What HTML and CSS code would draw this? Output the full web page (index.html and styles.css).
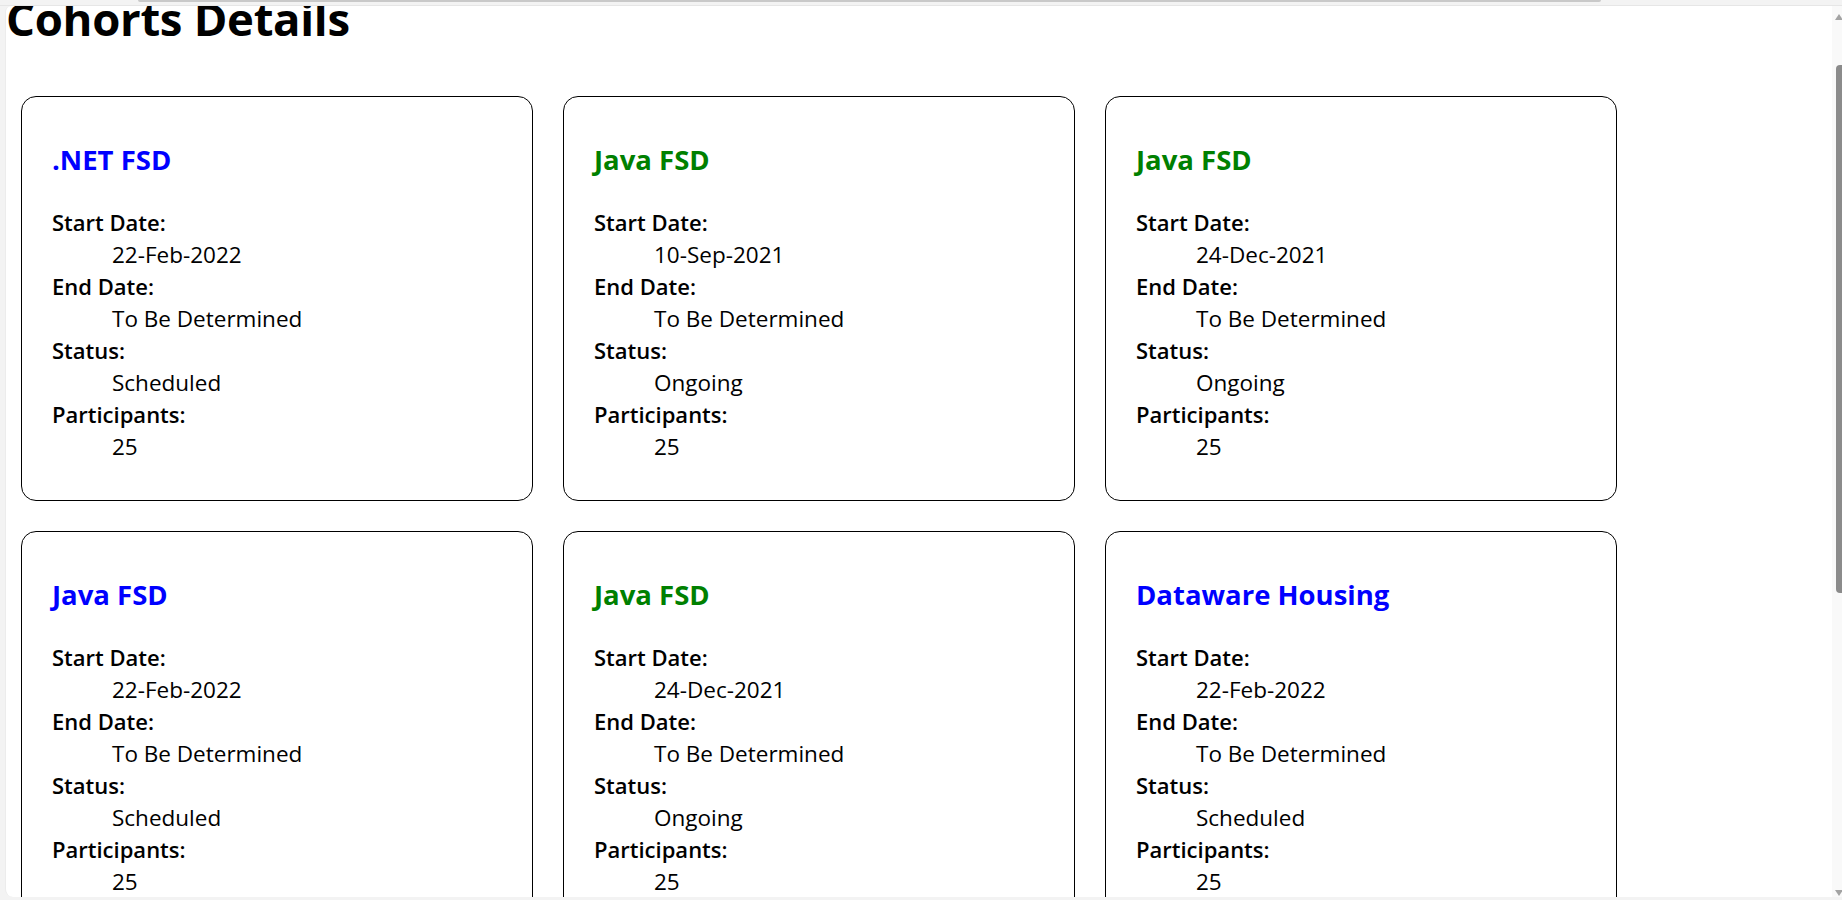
FILE: index.html
```html
<!DOCTYPE html>
<html lang="en">
<head>
<meta charset="utf-8">
<title>Cohorts Details</title>
<link rel="stylesheet" href="styles.css">
</head>
<body>
<div class="frame">
  <div class="topbar"><div class="topbar-line"></div></div>
  <div class="window">
    <div class="viewport">
      <div class="page">
        <h1 class="heading">Cohorts Details</h1>
        <div class="cohorts">
          <div class="card">
            <h3 class="title scheduled">.NET FSD</h3>
            <dl class="info">
              <dt>Start Date:</dt><dd>22-Feb-2022</dd>
              <dt>End Date:</dt><dd>To Be Determined</dd>
              <dt>Status:</dt><dd>Scheduled</dd>
              <dt>Participants:</dt><dd>25</dd>
            </dl>
          </div>
          <div class="card">
            <h3 class="title ongoing">Java FSD</h3>
            <dl class="info">
              <dt>Start Date:</dt><dd>10-Sep-2021</dd>
              <dt>End Date:</dt><dd>To Be Determined</dd>
              <dt>Status:</dt><dd>Ongoing</dd>
              <dt>Participants:</dt><dd>25</dd>
            </dl>
          </div>
          <div class="card">
            <h3 class="title ongoing">Java FSD</h3>
            <dl class="info">
              <dt>Start Date:</dt><dd>24-Dec-2021</dd>
              <dt>End Date:</dt><dd>To Be Determined</dd>
              <dt>Status:</dt><dd>Ongoing</dd>
              <dt>Participants:</dt><dd>25</dd>
            </dl>
          </div>
          <div class="card">
            <h3 class="title scheduled">Java FSD</h3>
            <dl class="info">
              <dt>Start Date:</dt><dd>22-Feb-2022</dd>
              <dt>End Date:</dt><dd>To Be Determined</dd>
              <dt>Status:</dt><dd>Scheduled</dd>
              <dt>Participants:</dt><dd>25</dd>
            </dl>
          </div>
          <div class="card">
            <h3 class="title ongoing">Java FSD</h3>
            <dl class="info">
              <dt>Start Date:</dt><dd>24-Dec-2021</dd>
              <dt>End Date:</dt><dd>To Be Determined</dd>
              <dt>Status:</dt><dd>Ongoing</dd>
              <dt>Participants:</dt><dd>25</dd>
            </dl>
          </div>
          <div class="card">
            <h3 class="title scheduled">Dataware Housing</h3>
            <dl class="info">
              <dt>Start Date:</dt><dd>22-Feb-2022</dd>
              <dt>End Date:</dt><dd>To Be Determined</dd>
              <dt>Status:</dt><dd>Scheduled</dd>
              <dt>Participants:</dt><dd>25</dd>
            </dl>
          </div>
        </div>
      </div>
    </div>
    <div class="scrollbar">
      <svg class="arrow" width="10" height="8" viewBox="0 0 10 8"><polygon points="1,7 5,1 9,7" fill="#a3a3a3"/></svg>
      <div class="thumb"></div>
      <div class="track-rest"></div>
      <svg class="arrow" width="10" height="8" viewBox="0 0 10 8"><polygon points="1,1 5,7 9,1" fill="#a3a3a3"/></svg>
    </div>
  </div>
</div>
</body>
</html>
```

FILE: styles.css
```css
html, body {
  margin: 0;
  padding: 0;
  background: #f3f3f3;
}

.frame {
  width: 1842px;
  height: 900px;
  display: flex;
  flex-direction: column;
  background: #f3f3f3;
  overflow: hidden;
}

.topbar {
  height: 6px;
  flex: none;
  border-bottom: 1px solid #e6e6e6;
  box-sizing: border-box;
  padding-left: 138px;
  padding-right: 241px;
}

.topbar-line {
  height: 2px;
  background: #c9c9c9;
  border-radius: 0 0 2px 2px;
}

.window {
  flex: 1;
  display: flex;
  margin-left: 5px;
  margin-bottom: 3px;
  min-height: 0;
}

.viewport {
  flex: 1;
  background: #ffffff;
  border-left: 1px solid #ececec;
  border-radius: 6px 0 0 8px;
  overflow: hidden;
  font-family: "Open Sans", "Noto Sans", sans-serif;
  color: #000;
}

/* page is scrolled down slightly */
.page {
  margin-top: -20px;
}

.heading {
  margin: 0 0 31px;
  font-size: 45.5px;
  line-height: 64px;
  font-weight: 700;
  letter-spacing: -0.3px;
}

.cohorts {
  display: flex;
  flex-wrap: wrap;
}

.card {
  box-sizing: border-box;
  width: 512px;
  margin: 15px;
  padding: 16px 30px 14px;
  border: 1px solid #000;
  border-radius: 15px;
}

.title {
  margin: 28px 0;
  font-size: 27.5px;
  line-height: 37px;
  font-weight: 700;
}

.title.scheduled { color: #0000ff; }
.title.ongoing { color: #008000; }

.info {
  margin: 24px 0;
  font-size: 22px;
  line-height: 32px;
}

.info dt {
  font-weight: 600;
}

.info dd {
  margin-left: 60px;
  font-size: 22.5px;
  line-height: 32px;
  padding-top: 1px;
  margin-bottom: -1px;
}

.scrollbar {
  width: 10px;
  flex: none;
  background: #f9f9f9;
  display: flex;
  flex-direction: column;
  align-items: flex-start;
  padding-top: 7px;
  box-sizing: border-box;
}

.arrow {
  flex: none;
  margin-left: 2px;
}

.thumb {
  flex: none;
  margin-top: 44px;
  margin-left: 4px;
  width: 7px;
  height: 528px;
  background: #8b8b8b;
  border-radius: 4px 0 0 4px;
}

.track-rest {
  flex: 1;
}
```
